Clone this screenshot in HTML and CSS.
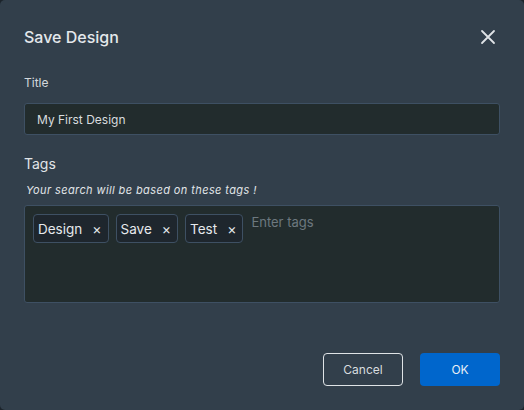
FILE: index.html
```html
<!DOCTYPE html>
<html lang="en">
<head>
    <meta charset="UTF-8">
    <meta name="viewport" content="width=device-width, initial-scale=1.0">
    <title>Save Design</title>
    <link rel="stylesheet" href="styles.css">
</head>
<body>
<div class="modal">
    <div class="modal-header">
        <h2 class="modal-title">Save Design</h2>
        <button class="close-button" aria-label="Close">
            <svg width="16" height="16" viewBox="0 0 16 16">
                <path d="M2 2 L14 14 M14 2 L2 14" stroke="#dfe3e6" stroke-width="1.8" stroke-linecap="round"/>
            </svg>
        </button>
    </div>

    <div class="field">
        <label class="field-label">Title</label>
        <input class="text-input" value="My First Design">
    </div>

    <div class="field tags-field">
        <div class="tags-label">Tags</div>
        <p class="tags-hint">Your search will be based on these tags !</p>
        <div class="tags-box">
            <span class="tag">Design <span class="tag-remove">×</span></span>
            <span class="tag">Save <span class="tag-remove">×</span></span>
            <span class="tag">Test <span class="tag-remove">×</span></span>
            <input class="tag-input" placeholder="Enter tags">
        </div>
    </div>

    <div class="modal-footer">
        <button class="btn btn-cancel">Cancel</button>
        <button class="btn btn-ok">OK</button>
    </div>
</div>
</body>
</html>
```

FILE: styles.css
```css
* { margin: 0; padding: 0; box-sizing: border-box; }
body {
    font-family: Inter, 'Noto Sans', sans-serif;
    background: #1c242b;
    width: 524px;
    height: 410px;
    overflow: hidden;
}
.modal {
    background: #323f4b;
    border-radius: 5px;
    width: 524px;
    height: 410px;
    padding: 0 24px;
    display: flex;
    flex-direction: column;
}
.modal-header {
    display: flex;
    align-items: center;
    justify-content: space-between;
    height: 73px;
}
.modal-title { font-size: 16px; font-weight: 500; color: #e4e8eb; }
.close-button {
    background: none; border: none;
    width: 16px; height: 16px;
    margin-right: 4px;
    display: flex;
}
.field-label {
    display: block;
    font-size: 12px;
    color: #d3d8dc;
    margin-top: 2px;
    margin-bottom: 13px;
}
.text-input {
    width: 100%;
    height: 32px;
    padding: 0 12px;
    background: #222c2d;
    border: 1px solid #3e5063;
    border-radius: 3px;
    color: #d8dcdf;
    font-family: inherit;
    font-size: 12px;
    outline: none;
}
.tags-field { margin-top: 20px; }
.tags-label { font-size: 14px; color: #e1e5e8; line-height: 17px; }
.tags-hint {
    font-size: 11px;
    font-style: italic;
    color: #e1e5e8;
    margin-top: 11px;
    margin-left: 2px;
    letter-spacing: 0.4px;
}
.tags-box {
    margin-top: 8px;
    height: 98px;
    background: #222c2d;
    border: 1px solid #3e5063;
    border-radius: 3px;
    padding: 8px;
    display: flex;
    align-items: flex-start;
    gap: 7px;
}
.tag {
    display: flex;
    align-items: center;
    height: 29px;
    padding: 0 6px 0 4px;
    background: #1e262d;
    border: 1px solid #3e5063;
    border-radius: 4px;
    color: #e6e9ec;
    font-size: 13.5px;
}
.tag-remove { font-size: 14px; margin-left: 10px; }
.tag-input {
    background: none; border: none; outline: none;
    font-family: inherit; font-size: 13px;
    color: #d8dcdf;
    margin-left: 1px;
    flex: 1;
}
.tag-input::placeholder { color: #6d787f; }
.modal-footer {
    display: flex;
    justify-content: flex-end;
    gap: 17px;
    margin-top: 50px;
}
.btn {
    width: 80px; height: 33px;
    font-family: inherit; font-size: 12px;
    border-radius: 4px;
}
.btn-cancel { background: transparent; border: 1px solid #dfe3e6; color: #d8dcdf; }
.btn-ok { background: #0066cc; border: none; color: #e8eef5; }
```
